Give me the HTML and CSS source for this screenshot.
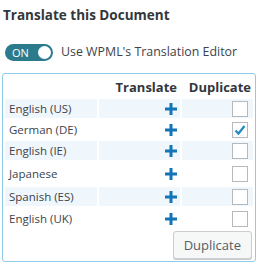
FILE: index.html
```html
<!DOCTYPE html>
<html lang="en">
<head>
  <meta charset="UTF-8">
  <title>Translate this Document</title>
  <link rel="stylesheet" href="styles.css">
</head>
<body>
  <h3 class="title">Translate this Document</h3>
  <div class="switch-row">
    <span class="switch"><span class="switch-label">ON</span><span class="knob"></span></span>
    <span class="switch-text">Use WPML's Translation Editor</span>
  </div>
  <div class="box">
    <table class="langs">
      <tr>
        <th class="col-lang"></th>
        <th class="col-tr">Translate</th>
        <th class="col-dup">Duplicate</th>
      </tr>
      <tr class="odd">
        <td class="lang">English (US)</td>
        <td class="tr"><svg class="plus" width="12" height="12" viewBox="0 0 12 12"><rect x="4.5" y="0" width="3" height="12"/><rect x="0" y="4.5" width="12" height="3"/></svg></td>
        <td class="dup"><span class="check"></span></td>
      </tr>
      <tr>
        <td class="lang">German (DE)</td>
        <td class="tr"><svg class="plus" width="12" height="12" viewBox="0 0 12 12"><rect x="4.5" y="0" width="3" height="12"/><rect x="0" y="4.5" width="12" height="3"/></svg></td>
        <td class="dup"><span class="check"><svg width="14" height="14" viewBox="0 0 14 14"><path d="M2.5 7.5 L5.5 10.5 L11.5 3" fill="none" stroke="#1e8cbe" stroke-width="2.2"/></svg></span></td>
      </tr>
      <tr class="odd">
        <td class="lang">English (IE)</td>
        <td class="tr"><svg class="plus" width="12" height="12" viewBox="0 0 12 12"><rect x="4.5" y="0" width="3" height="12"/><rect x="0" y="4.5" width="12" height="3"/></svg></td>
        <td class="dup"><span class="check"></span></td>
      </tr>
      <tr class="tall">
        <td class="lang">Japanese</td>
        <td class="tr"><svg class="plus" width="12" height="12" viewBox="0 0 12 12"><rect x="4.5" y="0" width="3" height="12"/><rect x="0" y="4.5" width="12" height="3"/></svg></td>
        <td class="dup"><span class="check"></span></td>
      </tr>
      <tr class="odd">
        <td class="lang">Spanish (ES)</td>
        <td class="tr"><svg class="plus" width="12" height="12" viewBox="0 0 12 12"><rect x="4.5" y="0" width="3" height="12"/><rect x="0" y="4.5" width="12" height="3"/></svg></td>
        <td class="dup"><span class="check"></span></td>
      </tr>
      <tr class="last">
        <td class="lang">English (UK)</td>
        <td class="tr"><svg class="plus" width="12" height="12" viewBox="0 0 12 12"><rect x="4.5" y="0" width="3" height="12"/><rect x="0" y="4.5" width="12" height="3"/></svg></td>
        <td class="dup"><span class="check"></span></td>
      </tr>
    </table>
    <div class="actions">
      <button class="btn">Duplicate</button>
    </div>
  </div>
</body>
</html>
```

FILE: styles.css
```css
body {
  margin: 0;
  padding: 0 2px;
  font-family: "Open Sans", "Noto Sans", sans-serif;
  color: #3c434a;
}
.title {
  margin: 6px 0 0 1px;
  font-size: 13.5px;
  line-height: 18px;
  font-weight: bold;
  color: #32373c;
}
.switch-row {
  display: flex;
  align-items: center;
  margin: 19px 0 0 3px;
  gap: 8px;
}
.switch {
  display: flex;
  align-items: center;
  justify-content: space-between;
  width: 48px;
  height: 17px;
  padding: 0 2px 0 7px;
  box-sizing: border-box;
  border-radius: 9px;
  background: #2c7b8d;
}
.switch-label {
  color: #fff;
  font-size: 11px;
  line-height: 17px;
}
.knob {
  width: 13px;
  height: 13px;
  border-radius: 50%;
  background: #fff;
}
.switch-text {
  font-size: 12.4px;
  line-height: 18px;
}
.box {
  width: 254px;
  box-sizing: border-box;
  margin-top: 12px;
  border: 1px solid #8ecbe9;
  border-radius: 3px;
  padding: 0 0 2px 0;
}
.langs {
  width: 100%;
  border-spacing: 2px;
  font-size: 11.5px;
}
.langs th {
  height: 21px;
  text-align: right;
  font-size: 13px;
  font-weight: bold;
  color: #32373c;
  padding: 0;
}
.col-lang {
  width: 92px;
}
.col-tr {
  width: 78px;
  padding-right: 3px !important;
}
.col-dup {
  padding-right: 2px !important;
}
.langs td {
  height: 19px;
  padding: 0;
}
.langs tr.odd td {
  background: #eff6fc;
}
.langs tr.tall td {
  height: 23px;
}
.langs tr.last td {
  height: 21px;
}
.lang {
  padding-left: 4px !important;
}
.tr {
  text-align: right;
  padding-right: 3px !important;
  line-height: 0;
}
.plus {
  fill: #1275b5;
}
.dup {
  text-align: right;
  padding-right: 5px !important;
  line-height: 0;
}
.check {
  display: inline-flex;
  align-items: center;
  justify-content: center;
  width: 16px;
  height: 16px;
  box-sizing: border-box;
  border: 1px solid #b4b9be;
  background: #fff;
}
.actions {
  display: flex;
  justify-content: flex-end;
  padding-right: 3px;
}
.btn {
  height: 28px;
  padding: 0 10px;
  font-family: inherit;
  font-size: 13px;
  color: #555d66;
  background: #f6f7f7;
  border: 1px solid #ccc;
  border-radius: 3px;
  box-shadow: 0 1px 0 #ccc;
}
```
